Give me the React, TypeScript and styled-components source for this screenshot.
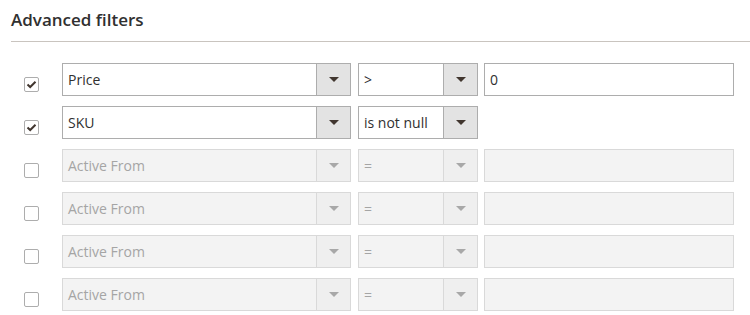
import React from "react";
import styled, { createGlobalStyle } from "styled-components";

const Global = createGlobalStyle`
  html, body { margin: 0; padding: 0; background: #fff; }
  body { font-family: "Open Sans", "Liberation Sans", sans-serif; color: #303030; }
`;

const Wrap = styled.div`
  width: 750px;
  height: 315px;
  padding-left: 11px;
  box-sizing: border-box;
`;

const Title = styled.h2`
  margin: 0;
  height: 42px;
  padding-top: 8px;
  box-sizing: border-box;
  font-size: 17px;
  font-weight: 600;
  line-height: 24px;
  color: #303030;
  border-bottom: 1px solid #c9c4bf;
`;

const Rows = styled.div`
  display: flex;
  flex-direction: column;
  gap: 10px;
  padding-top: 21px;
`;

const Row = styled.div`
  display: flex;
  align-items: flex-start;
  height: 33px;
`;

const CheckCell = styled.div`
  width: 51px;
  padding-left: 13px;
  padding-top: 14px;
  box-sizing: border-box;
`;

const Check = styled.span`
  display: flex;
  align-items: center;
  justify-content: center;
  width: 15px;
  height: 15px;
  border: 1px solid #adadad;
  border-radius: 2px;
  box-sizing: border-box;
  background: #fff;
`;

const Select = styled.div<{ $w: number; $disabled: boolean }>`
  display: flex;
  width: ${(p) => p.$w}px;
  height: 33px;
  box-sizing: border-box;
  border: 1px solid ${(p) => (p.$disabled ? "#d9d9d9" : "#adadad")};
  background: ${(p) => (p.$disabled ? "#f3f3f3" : "#fff")};
  margin-right: ${(p) => (p.$w > 200 ? 7 : 6)}px;
`;

const SelectText = styled.div<{ $disabled: boolean }>`
  flex: 1;
  padding-left: 5px;
  font-size: 14px;
  line-height: 31px;
  color: ${(p) => (p.$disabled ? "#a5a5a5" : "#303030")};
  white-space: nowrap;
  overflow: hidden;
`;

const ArrowBox = styled.div<{ $disabled: boolean }>`
  width: 34px;
  display: flex;
  align-items: center;
  justify-content: center;
  border-left: 1px solid ${(p) => (p.$disabled ? "#d9d9d9" : "#adadad")};
  background: ${(p) => (p.$disabled ? "#efefef" : "#e3e3e3")};
  box-sizing: border-box;
`;

const Arrow = styled.span<{ $disabled: boolean }>`
  width: 0;
  height: 0;
  border-left: 5px solid transparent;
  border-right: 5px solid transparent;
  border-top: 5px solid ${(p) => (p.$disabled ? "#a8a8a8" : "#41362f")};
`;

const Input = styled.div<{ $disabled: boolean }>`
  width: 250px;
  height: 33px;
  box-sizing: border-box;
  border: 1px solid ${(p) => (p.$disabled ? "#d9d9d9" : "#adadad")};
  background: ${(p) => (p.$disabled ? "#f3f3f3" : "#fff")};
  padding-left: 5px;
  font-size: 14px;
  line-height: 31px;
  color: #303030;
`;

type F = { on: boolean; field: string; op: string; value?: string | null };

const filters: F[] = [
  { on: true, field: "Price", op: ">", value: "0" },
  { on: true, field: "SKU", op: "is not null", value: null },
  { on: false, field: "Active From", op: "=", value: "" },
  { on: false, field: "Active From", op: "=", value: "" },
  { on: false, field: "Active From", op: "=", value: "" },
  { on: false, field: "Active From", op: "=", value: "" },
];

function Dropdown({ w, text, disabled }: { w: number; text: string; disabled: boolean }) {
  return (
    <Select $w={w} $disabled={disabled}>
      <SelectText $disabled={disabled}>{text}</SelectText>
      <ArrowBox $disabled={disabled}>
        <Arrow $disabled={disabled} />
      </ArrowBox>
    </Select>
  );
}

export default function App() {
  return (
    <Wrap>
      <Global />
      <Title>Advanced filters</Title>
      <Rows>
        {filters.map((f, i) => (
          <Row key={i}>
            <CheckCell>
              <Check>
                {f.on && (
                  <svg width="11" height="9" viewBox="0 0 11 9">
                    <path d="M1.5 4.5 L4.2 7 L9.5 1.8" fill="none" stroke="#41362f" strokeWidth="2" />
                  </svg>
                )}
              </Check>
            </CheckCell>
            <Dropdown w={289} text={f.field} disabled={!f.on} />
            <Dropdown w={120} text={f.op} disabled={!f.on} />
            {f.value !== null && <Input $disabled={!f.on}>{f.value}</Input>}
          </Row>
        ))}
      </Rows>
    </Wrap>
  );
}
